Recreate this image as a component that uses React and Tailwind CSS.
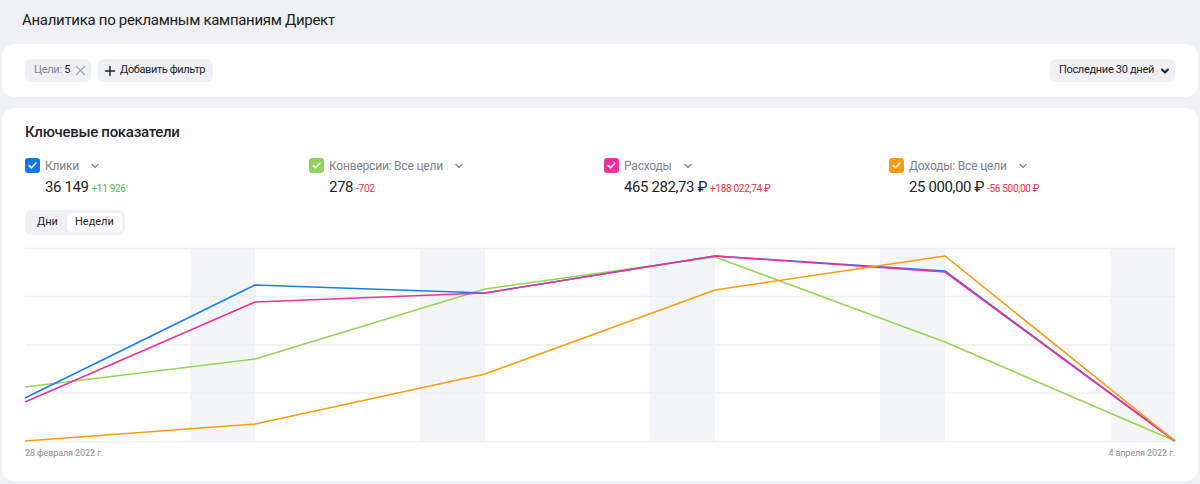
import React from "react";

const Chevron = ({ className = "", stroke = "#8a8f98", w = 1.4 }) => (
  <svg className={className} width="10" height="10" viewBox="0 0 10 10" fill="none">
    <path d="M2 3.5 L5 6.5 L8 3.5" stroke={stroke} strokeWidth={w} strokeLinecap="round" strokeLinejoin="round" />
  </svg>
);

const Check = ({ color }) => (
  <span className="flex h-[15px] w-[15px] items-center justify-center rounded-[3px]" style={{ background: color }}>
    <svg width="11" height="11" viewBox="0 0 11 11" fill="none">
      <path d="M2.2 5.6 L4.5 7.8 L8.8 3.2" stroke="#fff" strokeWidth="1.6" strokeLinecap="round" strokeLinejoin="round" />
    </svg>
  </span>
);

const metrics = [
  { color: "#1076f2", label: "Клики", value: "36 149", delta: "+11 926", pos: true, w: "w-[284px]" },
  { color: "#8fd35a", label: "Конверсии: Все цели", value: "278", delta: "-702", pos: false, w: "w-[295px]" },
  { color: "#f0309c", label: "Расходы", value: "465 282,73 ₽", delta: "+188 022,74 ₽", pos: false, w: "w-[285px]" },
  { color: "#ff9a0d", label: "Доходы: Все цели", value: "25 000,00 ₽", delta: "-56 500,00 ₽", pos: false, w: "w-[280px]" },
];

const series = [
  { color: "#95d553", pts: [[0, 139], [230, 111], [460, 41], [690, 9], [920, 94], [1150, 193]] },
  { color: "#1a7df5", pts: [[0, 150], [230, 37], [460, 45], [690, 8], [920, 23], [1150, 193]] },
  { color: "#ef2f9a", pts: [[0, 154], [230, 54], [460, 45], [690, 8], [920, 24], [1150, 193]] },
  { color: "#ff9b0f", pts: [[0, 193], [230, 176], [460, 126], [690, 42], [920, 8], [1150, 193]] },
];

export default function App() {
  return (
    <div className="h-[484px] w-full overflow-hidden bg-[#eef0f4] text-[#1f2329]" style={{ fontFamily: "Roboto, 'Noto Sans', sans-serif" }}>
      <div className="h-[44px] pl-[22px] pt-[10px] text-[15px] leading-[20px] tracking-[-0.3px] text-[#222]">
        Аналитика по рекламным кампаниям Директ
      </div>

      <div className="mx-[2px] flex h-[53px] items-center justify-between rounded-[12px] bg-white px-[23px]">
        <div className="flex items-center gap-[7px]">
          <div className="flex h-[23px] items-center gap-[5px] rounded-[6px] bg-[#eef0f4] pl-[9px] pr-[5px] text-[11px] tracking-[-0.3px]">
            <span className="text-[#7e838c]">Цели: <span className="text-[#1f2329]">5</span></span>
            <svg width="11" height="11" viewBox="0 0 12 12" fill="none">
              <path d="M1.5 1.5 L10.5 10.5 M10.5 1.5 L1.5 10.5" stroke="#9aa0a8" strokeWidth="1.2" strokeLinecap="round" />
            </svg>
          </div>
          <div className="flex h-[23px] items-center gap-[4px] rounded-[6px] bg-[#eef0f4] pl-[6px] pr-[8px] text-[11px] tracking-[-0.4px] text-[#1f2329]">
            <svg width="12" height="12" viewBox="0 0 12 12" fill="none">
              <path d="M6 1.5 V10.5 M1.5 6 H10.5" stroke="#1f2329" strokeWidth="1.5" strokeLinecap="round" />
            </svg>
            Добавить фильтр
          </div>
        </div>
        <div className="flex h-[23px] items-center gap-[6px] rounded-[6px] bg-[#eef0f4] pl-[9px] pr-[5px] text-[11px] tracking-[-0.3px] text-[#1f2329]">
          Последние 30 дней
          <Chevron stroke="#1f2329" w={2} />
        </div>
      </div>

      <div className="mx-[2px] mt-[11px] h-[373px] rounded-[12px] bg-white px-[23px] pt-[14px]">
        <div className="h-[20px] text-[15px] font-medium leading-[20px] tracking-[-0.3px] text-[#1f2329]">Ключевые показатели</div>

        <div className="mt-[16px] flex">
          {metrics.map((m) => (
            <div key={m.label} className={`${m.w} flex shrink-0 gap-[5px]`}>
              <div><Check color={m.color} /></div>
              <div>
                <div className="flex h-[16px] items-center gap-[11px] text-[12px] leading-[16px] tracking-[-0.2px] text-[#7e838c]">
                  {m.label}
                  <Chevron />
                </div>
                <div className="mt-[3px] flex items-baseline gap-[3px]">
                  <span className="text-[15px] leading-[20px] tracking-[-0.4px] text-[#1f2329]">{m.value}</span>
                  <span className={`text-[10px] tracking-[-0.3px] ${m.pos ? "text-[#54b54a]" : "text-[#f0303a]"}`}>{m.delta}</span>
                </div>
              </div>
            </div>
          ))}
        </div>

        <div className="mt-[13px] inline-flex h-[25px] items-center rounded-[6px] bg-[#eef0f4] p-[3px] text-[11px] text-[#1f2329]">
          <span className="px-[9px]">Дни</span>
          <span className="flex h-[19px] items-center rounded-[4px] bg-white px-[8px]">Недели</span>
        </div>

        <div className="mt-[13px]">
          <svg width="1150" height="195" viewBox="0 0 1150 195" className="block overflow-visible">
            {[165, 395, 625, 855, 1085].map((x) => (
              <rect key={x} x={x} y="0" width="65" height="193" fill="#f4f5f9" />
            ))}
            {[0.5, 48.5, 97, 145, 193.5].map((y) => (
              <line key={y} x1="0" x2="1150" y1={y} y2={y} stroke="#eceef2" strokeWidth="1.5" />
            ))}
            {series.map((s) => (
              <polyline
                key={s.color}
                points={s.pts.map((p) => p.join(",")).join(" ")}
                fill="none"
                stroke={s.color}
                strokeWidth="1.6"
                strokeLinejoin="round"
              />
            ))}
          </svg>
          <div className="mt-[5px] flex justify-between text-[9px] leading-[11px] tracking-[-0.1px] text-[#8a8f98]">
            <span>28 февраля 2022 г.</span>
            <span>4 апреля 2022 г.</span>
          </div>
        </div>
      </div>
    </div>
  );
}
